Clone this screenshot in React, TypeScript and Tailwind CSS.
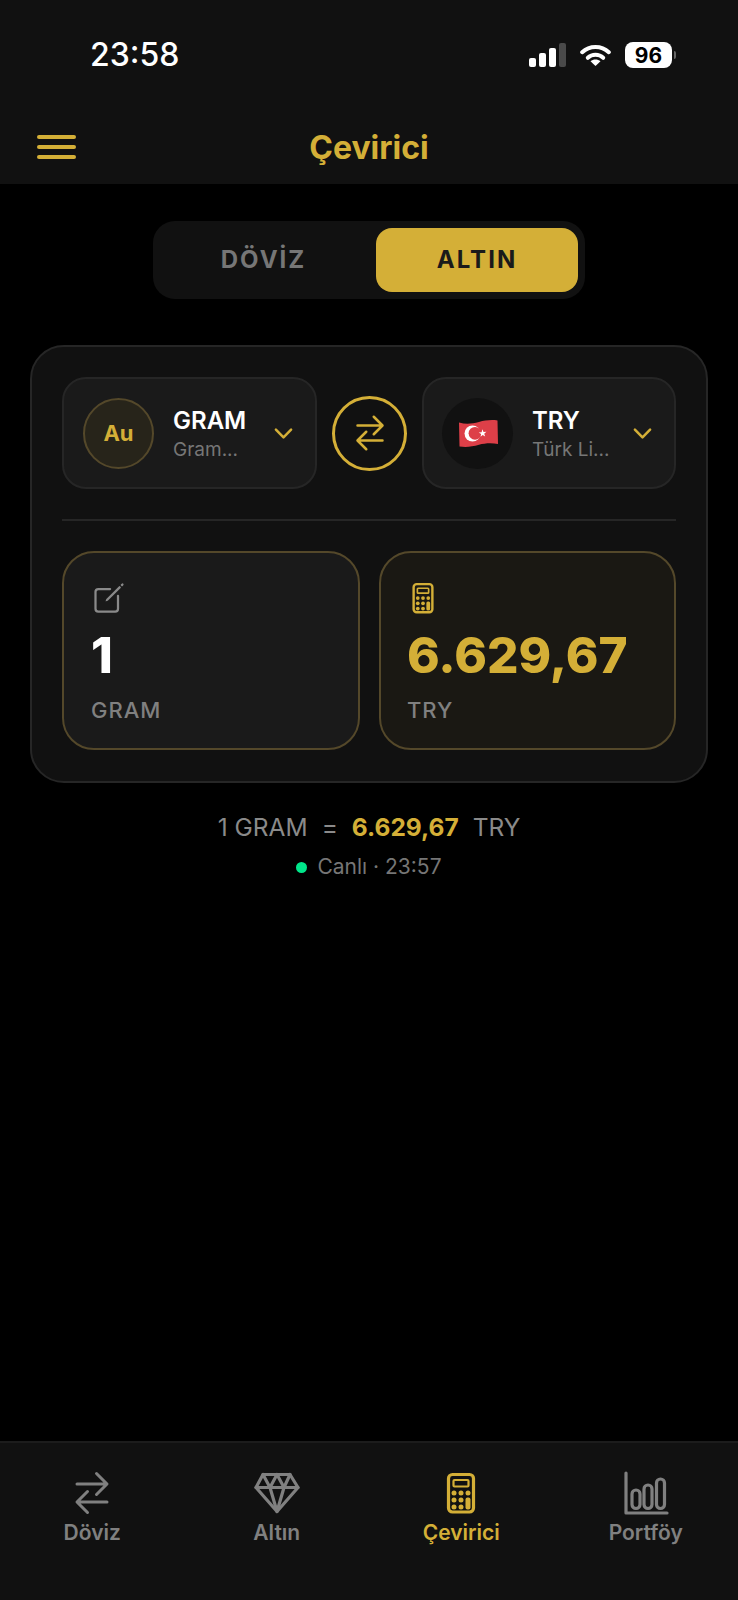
import { IoSwapHorizontal, IoCreateOutline, IoChevronDown } from 'react-icons/io5';
import type { ReactNode } from 'react';

function StatusBar() {
  return (
    <div className="flex h-[110px] items-start justify-between pl-[90px] pr-[62px] pt-[33px]">
      <span className="text-[32px] font-medium leading-[44px] text-white">23:58</span>
      <div className="mt-[9px] flex items-center">
        <div className="flex h-6 items-end gap-[3px]">
          <div className="h-[9px] w-[7px] rounded-[2px] bg-white" />
          <div className="h-[14px] w-[7px] rounded-[2px] bg-white" />
          <div className="h-[19px] w-[7px] rounded-[2px] bg-white" />
          <div className="h-6 w-[7px] rounded-[2px] bg-[#4a4a4a]" />
        </div>
        <svg width="31" height="22" viewBox="0 0 31 22" className="ml-[14px]" fill="none">
          <path d="M2.200 8.200C9.500 1.200 21.500 1.200 28.800 8.200" stroke="#fff" strokeWidth="4" strokeLinecap="round" />
          <path d="M7.800 13.800C12 9.800 19 9.800 23.200 13.800" stroke="#fff" strokeWidth="4" strokeLinecap="round" />
          <path d="M15.500 22 10.500 17.200C13.300 14.800 17.700 14.800 20.500 17.200Z" fill="#fff" />
        </svg>
        <div className="ml-[14px] flex h-[26px] w-[47px] items-center justify-center rounded-[8px] bg-white text-[21px] font-bold leading-none text-black">
          96
        </div>
        <div className="ml-[2px] h-[8px] w-[2px] rounded-r-full bg-[#666]" />
      </div>
    </div>
  );
}

function TopBar() {
  return (
    <div className="relative flex h-[74px] items-start justify-center pt-[16px]">
      <div className="absolute left-[37px] top-[25px] flex w-[39px] flex-col gap-[6px]">
        <div className="h-[4px] rounded-full bg-[#d4af37]" />
        <div className="h-[4px] rounded-full bg-[#d4af37]" />
        <div className="h-[4px] rounded-full bg-[#d4af37]" />
      </div>
      <span className="text-[32px] font-bold leading-[44px] text-[#d4af37]">Çevirici</span>
    </div>
  );
}

function Flag() {
  return (
    <svg width="42" height="30" viewBox="0 0 42 30">
      <path d="M2 4.500C9 6.500 15 5.800 22 4C28 2.400 34 1.600 40.500 2.500L41 26C35 24.800 28 25 22 26.800C15 28.800 9 29.500 2.500 28.500Z" fill="#dd3f48" />
      <circle cx="15.500" cy="15.500" r="8" fill="#fff" />
      <circle cx="18" cy="15.300" r="6.400" fill="#dd3f48" />
      <path d="m25.500 11.300 1 2.700 2.900-.2-2.200 1.900 1 2.700-2.500-1.500-2.200 1.800.6-2.800-2.400-1.500 2.900-.2Z" fill="#fff" />
    </svg>
  );
}

function CalculatorIcon({ size }: { size: number }) {
  return (
    <svg width={size} height={size} viewBox="0 0 48 48" fill="none" stroke="currentColor">
      <rect x="11.500" y="5.500" width="25" height="37.500" rx="4" strokeWidth="3.200" />
      <rect x="16.500" y="11" width="15" height="6.500" rx="1" strokeWidth="2.200" />
      <g fill="currentColor" stroke="none">
        <circle cx="17" cy="24" r="2.500" />
        <circle cx="24" cy="24" r="2.500" />
        <circle cx="31" cy="24" r="2.500" />
        <circle cx="17" cy="31" r="2.500" />
        <circle cx="24" cy="31" r="2.500" />
        <circle cx="17" cy="38" r="2.500" />
        <circle cx="24" cy="38" r="2.500" />
        <rect x="28.500" y="28.500" width="5" height="12" rx="2" />
      </g>
    </svg>
  );
}

function DiamondIcon() {
  return (
    <svg width="48" height="48" viewBox="0 0 48 48" fill="none" stroke="currentColor" strokeWidth="3.200" strokeLinejoin="round" strokeLinecap="round">
      <path d="M10 5.500H37L45 18.500 24 42.500 3 18.500Z" />
      <path d="M3 18.500H45" />
      <path d="M10 5.500 17 18.500 24 5.500 31 18.500 37 5.500" />
      <path d="M17 18.500 24 42.500 31 18.500" />
    </svg>
  );
}

function BarsIcon() {
  return (
    <svg width="48" height="48" viewBox="0 0 48 48" fill="none" stroke="currentColor" strokeWidth="3.200" strokeLinecap="round" strokeLinejoin="round">
      <path d="M4 4V44H45" />
      <rect x="10" y="21" width="8" height="18.500" rx="4" />
      <rect x="22" y="16" width="8" height="23.500" rx="4" />
      <rect x="34.500" y="10" width="8" height="29.500" rx="4" />
    </svg>
  );
}

function Selector({ icon, code, name, box }: { icon: ReactNode; code: string; name: string; box: string }) {
  return (
    <div className={`flex h-[112px] items-center rounded-[24px] border-2 border-[#262626] bg-[#1a1a1a] pr-[18px] ${box}`}>
      {icon}
      <div className="ml-[19px] flex flex-col pt-[4px]">
        <span className="text-[24px] font-semibold leading-[30px] text-white">{code}</span>
        <span className="text-[19px] leading-[28px] text-[#767676]">{name}</span>
      </div>
      <IoChevronDown size={27} color="#d4af37" className="ml-auto" />
    </div>
  );
}

function ValueCard({ icon, value, unit, gold, box }: { icon: ReactNode; value: string; unit: string; gold?: boolean; box: string }) {
  return (
    <div className={`flex h-[199px] flex-col rounded-[32px] border-2 border-[#54482a] pt-[27px] ${box} ${gold ? 'bg-[#1a1813]' : 'bg-[#1a1a1a]'}`}>
      {icon}
      <span className={`mt-[8px] text-[49.500px] font-extrabold leading-[62px] ${gold ? 'text-[#d4af37]' : 'text-white'}`}>{value}</span>
      <span className="mt-[10px] text-[22px] font-medium leading-[28px] tracking-[1px] text-[#808080]">{unit}</span>
    </div>
  );
}

function NavItem({ icon, label, active }: { icon: ReactNode; label: string; active?: boolean }) {
  return (
    <div className={`flex flex-1 flex-col items-center ${active ? 'text-[#d4af37]' : 'text-[#808080]'}`}>
      {icon}
      <span className="mt-[2px] text-[21px] font-semibold leading-[28px]">{label}</span>
    </div>
  );
}

export default function App() {
  return (
    <div className="flex h-[1600px] w-[738px] flex-col overflow-hidden bg-black font-['Inter',sans-serif]">
      <div className="bg-[#111111]">
        <StatusBar />
        <TopBar />
      </div>

      {/* Döviz / Altın switch */}
      <div className="mx-auto mt-[37px] flex h-[78px] w-[432px] items-center gap-[9px] rounded-[22px] bg-[#111111] pl-[7px]">
        <div className="flex w-[207px] justify-center text-[24px] font-bold tracking-[2px] text-[#767676]">DÖVİZ</div>
        <div className="flex h-[64px] w-[202px] items-center justify-center rounded-[16px] bg-[#d4af37] text-[24px] font-bold tracking-[2px] text-[#1a1a1a]">
          ALTIN
        </div>
      </div>

      {/* Converter card */}
      <div className="mx-[30px] mt-[46px] flex h-[438px] flex-col rounded-[34px] border-2 border-[#262626] bg-[#111111] px-[30px] pt-[30px]">
        <div className="flex items-center justify-between">
          <Selector
            box="w-[255px] pl-[19px]"
            icon={
              <div className="flex h-[71px] w-[71px] shrink-0 items-center justify-center rounded-full border-2 border-[#54482a] bg-[#27241a] text-[22px] font-bold text-[#d4af37]">
                Au
              </div>
            }
            code="GRAM"
            name="Gram..."
          />
          <div className="flex h-[75px] w-[75px] items-center justify-center rounded-full border-[3px] border-[#d4af37]">
            <IoSwapHorizontal size={40} color="#d4af37" />
          </div>
          <Selector
            box="w-[254px] pl-[18px]"
            icon={
              <div className="flex h-[71px] w-[71px] shrink-0 items-center justify-center rounded-full bg-[#111111]">
                <Flag />
              </div>
            }
            code="TRY"
            name="Türk Li..."
          />
        </div>

        <div className="mt-[30px] h-[2px] bg-[#262626]" />

        <div className="mt-[30px] flex justify-between">
          <ValueCard box="w-[298px] pl-[27px]" icon={<IoCreateOutline size={36} color="#8a8a8a" />} value="1" unit="GRAM" />
          <ValueCard
            box="w-[297px] pl-[26px]"
            icon={
              <div className="-ml-[2px] text-[#d4af37]">
                <CalculatorIcon size={36} />
              </div>
            }
            value="6.629,67"
            unit="TRY"
            gold
          />
        </div>
      </div>

      {/* Rate line */}
      <div className="mt-[28px] flex items-center justify-center gap-[14px] text-[24.500px] leading-[32px] text-[#8a8a8a]">
        <span>1 GRAM</span>
        <span>=</span>
        <span className="font-bold text-[#d4af37]">6.629,67</span>
        <span>TRY</span>
      </div>
      <div className="mt-[10px] flex items-center justify-center gap-[10px] text-[21px] leading-[28px] text-[#767676]">
        <div className="h-[11px] w-[11px] rounded-full bg-[#00e68a]" />
        <span>Canlı · 23:57</span>
      </div>

      <div className="flex-1" />

      {/* Bottom tabs */}
      <div className="flex h-[159px] border-t-2 border-[#1c1c1c] bg-[#111111] pt-[26px]">
        <NavItem icon={<IoSwapHorizontal size={48} />} label="Döviz" />
        <NavItem icon={<DiamondIcon />} label="Altın" />
        <NavItem icon={<CalculatorIcon size={48} />} label="Çevirici" active />
        <NavItem icon={<BarsIcon />} label="Portföy" />
      </div>
    </div>
  );
}
